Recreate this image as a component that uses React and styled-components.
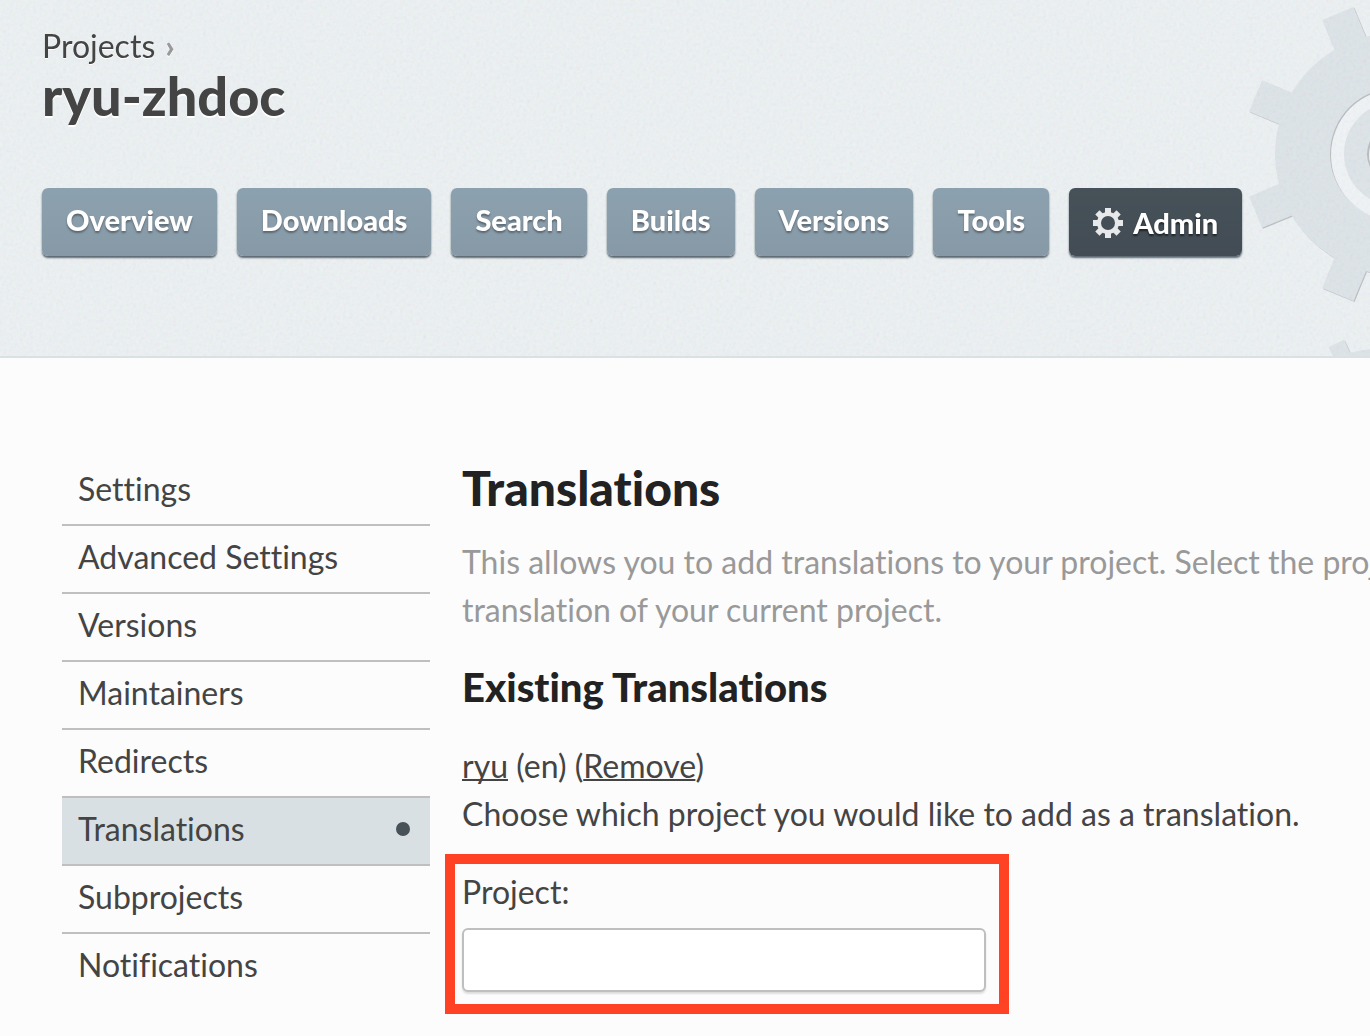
import React from 'react';
import styled, { createGlobalStyle, css } from 'styled-components';

const GlobalStyle = createGlobalStyle`
  *, *::before, *::after { box-sizing: border-box; }
  body {
    margin: 0;
    overflow-x: hidden;
    background: #fcfcfc;
    color: #444;
    font-family: Lato, 'Open Sans', 'Liberation Sans', sans-serif;
    font-size: 32px;
    font-variant-ligatures: none;
    line-height: 48px;
  }
  h1, h2, h3, p, ul { margin: 0; padding: 0; }
`;

const Header = styled.header`
  position: relative;
  overflow: hidden;
  padding: 27px 42px 100px;
  background: #edf2f4;
  border-bottom: 2px solid #d9e1e4;
`;

const Grain = styled.svg`
  position: absolute;
  inset: 0;
  width: 100%;
  height: 100%;
  opacity: 0.12;
`;

const Gears = styled.svg`
  position: absolute;
  top: 0;
  right: 0;
  width: 140px;
  height: 356px;
`;

const HeaderContent = styled.div`
  position: relative;
`;

const Breadcrumb = styled.div`
  display: flex;
  gap: 10px;
  line-height: 38px;
  text-shadow: 0 1px 0 #fff;
`;

const BreadcrumbLink = styled.a`
  color: #444;
  text-decoration: none;
`;

const Separator = styled.span`
  color: #999;
  font-weight: 900;
`;

const Title = styled.h1`
  font-size: 54px;
  font-weight: 900;
  line-height: 62px;
  text-shadow: 0 2px 0 #fff;
`;

const Tabs = styled.nav`
  display: flex;
  gap: 20px;
  margin-top: 61px;
`;

const Tab = styled.a`
  display: flex;
  align-items: center;
  gap: 10px;
  padding: 8px 24px 12px;
  border-radius: 6px;
  background: linear-gradient(#8ca1af, #8799a7);
  box-shadow: 0 2px 2px #5b6770;
  color: #fff;
  font-size: 29px;
  font-weight: 900;
  text-decoration: none;
  text-shadow: 0 2px 2px #5b6770;
  white-space: nowrap;

  ${({ $active }) =>
    $active &&
    css`
      padding: 11px 24px 9px;
      background: linear-gradient(#465158, #434c55);
      text-shadow: 0 2px 2px #1e2528;
    `}
`;

const Columns = styled.div`
  display: grid;
  grid-template-columns: 368px minmax(0, 1fr);
  gap: 32px;
  padding: 100px 0 22px 62px;
`;

const Menu = styled.ul`
  list-style: none;
`;

const MenuItem = styled.li`
  border-bottom: 2px solid #bfbfbf;

  &:last-child {
    border-bottom: 0;
  }
`;

const MenuLink = styled.a`
  display: flex;
  align-items: center;
  justify-content: space-between;
  padding: 7px 20px 11px 16px;
  background: ${({ $active }) => ($active ? '#d8e0e3' : 'transparent')};
  color: #444;
  text-decoration: none;
`;

const Dot = styled.span`
  width: 14px;
  height: 14px;
  border-radius: 50%;
  background: #465158;
`;

const Main = styled.main`
  overflow: hidden;
  margin-left: -17px;
  padding-left: 17px;
`;

const PageHeading = styled.h2`
  margin-bottom: 20px;
  color: #222;
  font-size: 48px;
  font-weight: 900;
  line-height: 60px;
`;

const Intro = styled.p`
  color: #999;
  white-space: nowrap;
`;

const SectionHeading = styled.h3`
  margin: 28px 0 30px;
  color: #222;
  font-size: 40px;
  font-weight: 900;
  line-height: 50px;
`;

const TextLink = styled.a`
  color: #444;
  text-decoration: underline;
  text-decoration-thickness: 2px;
  text-decoration-skip-ink: none;
`;

const HighlightedField = styled.div`
  display: flex;
  flex-direction: column;
  gap: 12px;
  width: fit-content;
  margin: 16px 0 0 -17px;
  padding: 4px 13px 12px 7px;
  border: 10px solid #ff4124;
`;

const TextInput = styled.input`
  width: 524px;
  height: 64px;
  padding: 8px;
  border: 2px solid #bfbfbf;
  border-radius: 6px;
  background: #fff;
  box-shadow: 0 2px 2px #ddd;
  color: #444;
  font: inherit;
`;

const TOOTH_ANGLES = [22.5, 67.5, 112.5, 157.5, 202.5, 247.5, 292.5, 337.5];

function HeaderArt() {
  return (
    <Gears viewBox="1230 0 140 356" aria-hidden="true">
      <defs>
        <filter id="edge" x="-10%" y="-10%" width="120%" height="120%">
          <feDropShadow dx="1" dy="1" stdDeviation="0.5" floodColor="#a5aaad" floodOpacity="0.7" />
        </filter>
      </defs>
      <g fill="#dee5e9" filter="url(#edge)">
        <circle cx="1396" cy="154" r="121" />
        {TOOTH_ANGLES.map((angle) => (
          <rect key={angle} x="1379" y="2" width="34" height="44" transform={`rotate(${angle} 1396 154)`} />
        ))}
        <circle cx="1376" cy="432" r="83" />
        <rect x="1369" y="335" width="17" height="22" transform="rotate(-25 1376 432)" />
      </g>
      <circle cx="1396" cy="154" r="66" fill="#b9bdbf" />
      <circle cx="1397" cy="155" r="66" fill="#f0f4f7" />
      <circle cx="1396" cy="154" r="52" fill="#dee5e9" />
      <circle cx="1396" cy="154" r="29" fill="#b9bdbf" />
      <circle cx="1397" cy="155" r="28" fill="#f0f4f7" />
    </Gears>
  );
}

function GearIcon() {
  return (
    <svg width="30" height="30" viewBox="-15 -15 30 30" aria-hidden="true">
      <circle r="9" fill="none" stroke="#e6e8e9" strokeWidth="4" />
      {[0, 45, 90, 135, 180, 225, 270, 315].map((angle) => (
        <rect key={angle} x="-3" y="-15" width="6" height="6" fill="#e6e8e9" transform={`rotate(${angle})`} />
      ))}
    </svg>
  );
}

const tabs = ['Overview', 'Downloads', 'Search', 'Builds', 'Versions', 'Tools', 'Admin'];

const menu = [
  'Settings',
  'Advanced Settings',
  'Versions',
  'Maintainers',
  'Redirects',
  'Translations',
  'Subprojects',
  'Notifications',
];

export default function App() {
  return (
    <>
      <GlobalStyle />
      <Header>
        <HeaderArt />
        <Grain aria-hidden="true">
          <filter id="grain" x="0" y="0" width="100%" height="100%">
            <feTurbulence type="fractalNoise" baseFrequency="0.3" numOctaves="3" />
          </filter>
          <rect width="100%" height="100%" filter="url(#grain)" />
        </Grain>
        <HeaderContent>
          <Breadcrumb>
            <BreadcrumbLink href="#projects">Projects</BreadcrumbLink>
            <Separator>›</Separator>
          </Breadcrumb>
          <Title>ryu-zhdoc</Title>
          <Tabs>
            {tabs.map((name) => (
              <Tab key={name} href={`#${name}`} $active={name === 'Admin'}>
                {name === 'Admin' && <GearIcon />}
                {name}
              </Tab>
            ))}
          </Tabs>
        </HeaderContent>
      </Header>
      <Columns>
        <Menu>
          {menu.map((name) => (
            <MenuItem key={name}>
              <MenuLink href={`#${name}`} $active={name === 'Translations'}>
                {name}
                {name === 'Translations' && <Dot />}
              </MenuLink>
            </MenuItem>
          ))}
        </Menu>
        <Main>
          <PageHeading>Translations</PageHeading>
          <Intro>
            This allows you to add translations to your project. Select the project
            <br />
            translation of your current project.
          </Intro>
          <SectionHeading>Existing Translations</SectionHeading>
          <p>
            <TextLink href="#ryu">ryu</TextLink> (en) (<TextLink href="#remove">Remove</TextLink>)
          </p>
          <p>Choose which project you would like to add as a translation.</p>
          <HighlightedField>
            <label htmlFor="project">Project:</label>
            <TextInput id="project" type="text" />
          </HighlightedField>
        </Main>
      </Columns>
    </>
  );
}
